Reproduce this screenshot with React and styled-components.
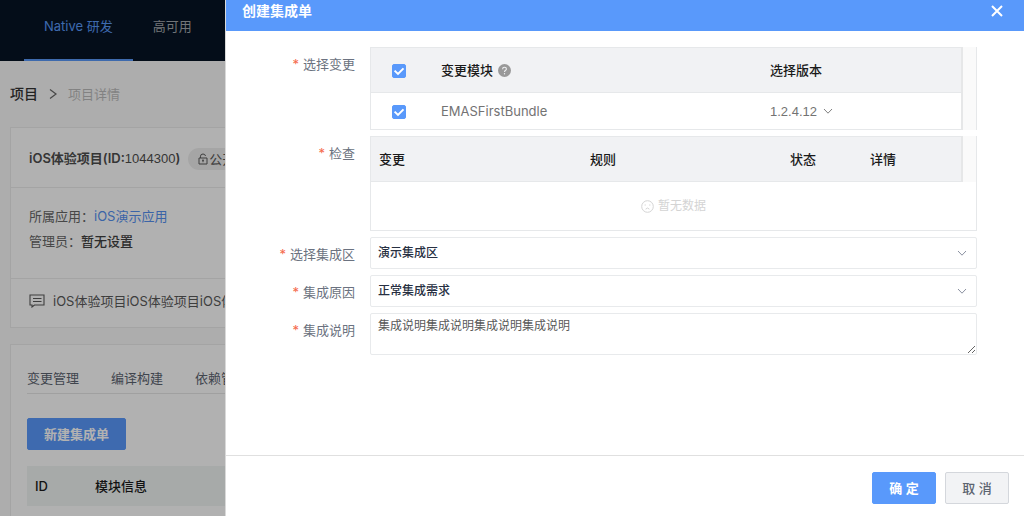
import { useState } from 'react';
import styled, { createGlobalStyle } from 'styled-components';

const GlobalStyle = createGlobalStyle`
  * {
    box-sizing: border-box;
  }

  body {
    margin: 0;
    background: #f8f8f8;
    font-family: Inter, 'Noto Sans CJK SC', sans-serif;
    font-size: 13px;
    line-height: 20px;
    color: #595959;
  }

  button, input, select, textarea {
    font-family: inherit;
    margin: 0;
  }
`;

/* ---------- page behind the drawer ---------- */

const Page = styled.div`
  height: 100vh;
  overflow: hidden;
`;

const TopNav = styled.nav`
  display: flex;
  height: 61px;
  padding-left: 24px;
  background: #071425;
`;

const NavLink = styled.a`
  display: flex;
  align-items: center;
  padding: 0 20px 7px;
  color: ${(props) => (props.$active ? '#5999f8' : '#a3a6ab')};
  border-bottom: 2px solid ${(props) => (props.$active ? '#5999f8' : 'transparent')};
  text-decoration: none;
`;

const Breadcrumb = styled.div`
  display: flex;
  align-items: center;
  gap: 11px;
  height: 66px;
  padding: 0 10px;
  color: #bbb;

  svg {
    color: #666;
  }

  strong {
    font-size: 14px;
    font-weight: 500;
    color: #333;
  }
`;

const Card = styled.section`
  margin: 0 10px 16px;
  background: #fefefe;
  border: 1px solid #ebebeb;
`;

const CardHeader = styled.header`
  display: flex;
  align-items: center;
  gap: 8px;
  height: 59px;
  padding: 2px 18px 0;
  white-space: nowrap;
`;

const ProjectTitle = styled.h2`
  margin: 0;
  font-size: 13px;
  font-weight: 600;
  color: #4d4d4d;

  span {
    font-family: 'Liberation Sans', sans-serif;
    font-weight: 400;
  }
`;

const Badge = styled.span`
  display: flex;
  align-items: center;
  gap: 1px;
  height: 22px;
  padding: 0 10px;
  border-radius: 11px;
  background: #ededed;
`;

const CardBody = styled.div`
  height: 91px;
  padding: 16px 18px;
  border-top: 1px solid #ebebeb;
  line-height: 25px;
  color: #666;

  a {
    color: #5590f0;
    text-decoration: none;
  }

  b {
    font-weight: 500;
    color: #404040;
  }
`;

const CardFooter = styled.footer`
  display: flex;
  align-items: center;
  gap: 8px;
  height: 49px;
  padding: 0 18px 4px;
  border-top: 1px solid #ebebeb;
  white-space: nowrap;
`;

const TabCard = styled(Card)`
  padding: 17px 16px;
`;

const Tabs = styled.div`
  display: flex;
  gap: 32px;
  height: 32px;
  line-height: 32px;
  border-bottom: 1px solid #e6e6e6;
`;

const Tab = styled.a`
  color: #5c6370;
  text-decoration: none;
`;

const Button = styled.button`
  height: 32px;
  min-width: ${(props) => (props.$small ? '64px' : '99px')};
  padding: 0 16px 2px;
  border: 1px solid ${(props) => (props.$plain ? '#d4d7dc' : '#5999fb')};
  border-radius: 2px;
  background: ${(props) => (props.$plain ? '#f2f3f5' : '#5999fb')};
  color: ${(props) => (props.$plain ? '#5c6470' : '#fff')};
  font-size: 13px;
  font-weight: ${(props) => (props.$plain ? 500 : 600)};
  cursor: pointer;
`;

const CreateButton = styled(Button)`
  display: block;
  margin: 24px 0 16px;
`;

const ListTable = styled.table`
  width: 100%;
  border-collapse: collapse;
  table-layout: fixed;

  th {
    height: 40px;
    padding: 0 8px;
    background: #f0f4f2;
    color: #1a1a1a;
    font-weight: 500;
    text-align: left;
  }

  th:first-child {
    width: 60px;
  }
`;

/* ---------- drawer ---------- */

const Mask = styled.div`
  position: fixed;
  inset: 0;
  background: rgba(0, 0, 0, 0.3);
`;

const Drawer = styled.aside`
  position: fixed;
  top: 0;
  right: 0;
  bottom: 0;
  left: 225px;
  display: flex;
  flex-direction: column;
  border-left: 1px solid #d9d9d9;
  background: #fff;
`;

const DrawerHeader = styled.header`
  display: flex;
  justify-content: space-between;
  align-items: center;
  padding: 0 19px 9px 16px;
  background: #5999fb;
  color: #fff;
`;

const DrawerTitle = styled.h1`
  margin: 0;
  font-size: 14px;
  line-height: 22px;
  font-weight: 600;
`;

const CloseButton = styled.button`
  display: flex;
  padding: 0;
  border: 0;
  background: none;
  color: #fff;
  cursor: pointer;
`;

const Form = styled.form`
  flex: 1;
  display: flex;
  flex-direction: column;
  gap: 6px;
  padding: 16px 47px 16px 0;
  overflow: auto;
`;

const FormRow = styled.div`
  display: grid;
  grid-template-columns: 129px 1fr;
  column-gap: 15px;
`;

const Label = styled.label`
  margin-bottom: -2px;
  line-height: 34px;
  text-align: right;
  color: #6b7280;

  &::before {
    content: '*';
    margin-right: 4px;
    color: #f5694b;
  }
`;

const TableBox = styled.div`
  border: 1px solid #e6e8ea;
  border-width: ${(props) => (props.$closed ? '0 1px 1px' : '0 1px 0')};
`;

const TableArea = styled.div`
  padding-right: 13px;
  background: #fafafa;
`;

const Table = styled.table`
  width: 100%;
  border-collapse: separate;
  border-spacing: 0;
  border-right: 2px solid #e6e7e8;
  background: #fff;
  table-layout: fixed;

  th, td {
    padding: 0 ${(props) => props.$pad};
    border-bottom: 1px solid #e6e8ea;
    text-align: left;
  }

  th {
    height: 46px;
    border-top: 1px solid #e6e8ea;
    background: #f1f2f4;
    color: #1a1a1a;
    font-weight: 500;
  }

  td {
    height: 37px;
    color: #737373;
  }
`;

const Col = styled.col`
  width: ${(props) => props.$w};
`;

const HeadText = styled.span`
  display: flex;
  align-items: center;
  gap: 5px;
`;

const CheckWrap = styled.span`
  position: relative;
  display: block;
  width: 14px;
  height: 14px;

  input {
    display: block;
    width: 14px;
    height: 14px;
    appearance: none;
    border: 1px solid #5999fb;
    border-radius: 2px;
    background: #fff;
    cursor: pointer;
  }

  input:checked {
    background: #5999fb;
  }

  svg {
    position: absolute;
    inset: 0;
    pointer-events: none;
  }
`;

const CheckCell = styled.span`
  display: flex;
  padding: 2px 0 0 7px;
`;

const Empty = styled.div`
  display: flex;
  align-items: center;
  justify-content: center;
  gap: 4px;
  height: 48px;
  font-size: 12px;
  color: #d4d4d4;
`;

const SelectWrap = styled.div`
  position: relative;
  display: ${(props) => (props.$inline ? 'inline-flex' : 'flex')};
  align-items: center;

  svg {
    position: absolute;
    right: ${(props) => (props.$inline ? '0' : '10px')};
    color: ${(props) => (props.$inline ? '#808080' : '#8a90a0')};
    pointer-events: none;
  }
`;

const Select = styled.select`
  width: 100%;
  height: 32px;
  padding: 0 28px 1px 7px;
  appearance: none;
  border: 1px solid #e8eaec;
  border-radius: 2px;
  background: #fff;
  color: #273042;
  font-size: 12px;
  font-weight: 500;
`;

const VersionSelect = styled.select`
  height: 24px;
  padding: 0 16px 0 0;
  appearance: none;
  border: 0;
  background: none;
  color: #737373;
  font-family: 'Liberation Sans', sans-serif;
  font-size: 13px;
`;

const TextArea = styled.textarea`
  display: block;
  width: 100%;
  height: 42px;
  padding: 2px 7px;
  border: 1px solid #e8eaec;
  border-radius: 2px;
  color: #595959;
  font-size: 12px;
  line-height: 20px;
  resize: vertical;
`;

const DrawerFooter = styled.footer`
  display: flex;
  justify-content: flex-end;
  gap: 9px;
  padding: 16px 15px 12px;
  border-top: 1px solid #e0e0e0;
`;

/* ---------- icons ---------- */

const Stroke = ({ size = 10, w, h, width = 1, children }) => (
  <svg
    width={w || size}
    height={h || size}
    viewBox={`0 0 ${w || size} ${h || size}`}
    fill="none"
    stroke="currentColor"
    strokeWidth={width}
    aria-hidden="true"
  >
    {children}
  </svg>
);

const ChevronDown = () => (
  <Stroke>
    <path d="M1 3 L5 7.2 L9 3" />
  </Stroke>
);

const ChevronRight = () => (
  <Stroke w={8} h={12} width={1.2}>
    <path d="M1 1.5 L7 6 L1 10.5" />
  </Stroke>
);

const CloseIcon = () => (
  <Stroke size={16} width={2}>
    <path d="M3 3 L13 13 M13 3 L3 13" />
  </Stroke>
);

const LockIcon = () => (
  <Stroke w={10} h={12}>
    <path d="M1 5 H9 V11 H1 Z M2.5 5 V3.2 Q2.5 1 5 1 Q7.2 1 7.5 3 M5 7 V9.2 M4 7.2 H6" />
  </Stroke>
);

const MessageIcon = () => (
  <Stroke w={16} h={14} width={1.1}>
    <path d="M1 1 H15 V11 H5.5 L3 13 V11 H1 Z M4 4.5 H12.5 M4 7.5 H12.5" />
  </Stroke>
);

const SadIcon = () => (
  <Stroke size={13}>
    <circle cx="6.5" cy="6.5" r="5.8" />
    <path d="M4.6 9.2 Q6.5 6.8 8.4 9.2" />
    <path d="M3.6 5 H4.8 M8.2 5 H9.4" />
  </Stroke>
);

const HelpIcon = () => (
  <svg width="13" height="13" viewBox="0 0 13 13" aria-hidden="true">
    <circle cx="6.5" cy="6.5" r="6.5" fill="#999" />
    <path
      d="M4.6 5.2 Q4.6 3.3 6.5 3.3 Q8.4 3.3 8.4 5 Q8.4 5.9 7.4 6.5 Q6.5 7 6.5 8"
      fill="none"
      stroke="#f1f2f4"
      strokeWidth="1.1"
    />
    <circle cx="6.5" cy="9.7" r="0.7" fill="#f1f2f4" />
  </svg>
);

const Checkbox = ({ label, checked, onChange }) => (
  <CheckWrap>
    <input
      type="checkbox"
      aria-label={label}
      checked={checked}
      onChange={(e) => onChange(e.target.checked)}
    />
    {checked && (
      <svg width="14" height="14" viewBox="0 0 14 14" fill="none" stroke="#fff" strokeWidth="2">
        <path d="M2.6 6.6 L6 9.9 L11.5 4.4" />
      </svg>
    )}
  </CheckWrap>
);

const App = () => {
  const [checked, setChecked] = useState(true);
  const [note, setNote] = useState('集成说明集成说明集成说明集成说明');

  return (
    <>
      <GlobalStyle />
      <Page>
        <TopNav>
          <NavLink href="#native" $active>Native 研发</NavLink>
          <NavLink href="#ha">高可用</NavLink>
        </TopNav>

        <Breadcrumb>
          <strong>项目</strong>
          <ChevronRight />
          <span>项目详情</span>
        </Breadcrumb>

        <Card>
          <CardHeader>
            <ProjectTitle>iOS体验项目(ID:<span>1044300</span>)</ProjectTitle>
            <Badge>
              <LockIcon />
              公开
            </Badge>
          </CardHeader>
          <CardBody>
            <div>所属应用：<a href="#app">iOS演示应用</a></div>
            <div>管理员：<b>暂无设置</b></div>
          </CardBody>
          <CardFooter>
            <MessageIcon />
            <span>iOS体验项目iOS体验项目iOS体验项目</span>
          </CardFooter>
        </Card>

        <TabCard>
          <Tabs>
            <Tab href="#change">变更管理</Tab>
            <Tab href="#build">编译构建</Tab>
            <Tab href="#deps">依赖管理</Tab>
          </Tabs>
          <CreateButton type="button">新建集成单</CreateButton>
          <ListTable>
            <thead>
              <tr>
                <th>ID</th>
                <th>模块信息</th>
              </tr>
            </thead>
          </ListTable>
        </TabCard>
      </Page>

      <Mask />

      <Drawer>
        <DrawerHeader>
          <DrawerTitle>创建集成单</DrawerTitle>
          <CloseButton type="button" aria-label="关闭">
            <CloseIcon />
          </CloseButton>
        </DrawerHeader>

        <Form id="integration" onSubmit={(e) => e.preventDefault()}>
          <FormRow>
            <Label as="span">选择变更</Label>
            <TableBox>
              <TableArea>
                <Table $pad="14px">
                  <colgroup>
                    <Col $w="56px" />
                    <Col />
                    <Col $w="205px" />
                  </colgroup>
                  <thead>
                    <tr>
                      <th>
                        <CheckCell>
                          <Checkbox label="全选" checked={checked} onChange={setChecked} />
                        </CheckCell>
                      </th>
                      <th>
                        <HeadText>变更模块 <HelpIcon /></HeadText>
                      </th>
                      <th>选择版本</th>
                    </tr>
                  </thead>
                  <tbody>
                    <tr>
                      <td>
                        <CheckCell>
                          <Checkbox label="EMASFirstBundle" checked={checked} onChange={setChecked} />
                        </CheckCell>
                      </td>
                      <td>EMASFirstBundle</td>
                      <td>
                        <SelectWrap $inline>
                          <VersionSelect aria-label="选择版本">
                            <option>1.2.4.12</option>
                          </VersionSelect>
                          <ChevronDown />
                        </SelectWrap>
                      </td>
                    </tr>
                  </tbody>
                </Table>
              </TableArea>
            </TableBox>
          </FormRow>

          <FormRow>
            <Label as="span">检查</Label>
            <TableBox $closed>
              <TableArea>
                <Table $pad="8px">
                  <colgroup>
                    <Col />
                    <Col $w="200px" />
                    <Col $w="80px" />
                    <Col $w="99px" />
                  </colgroup>
                  <thead>
                    <tr>
                      <th>变更</th>
                      <th>规则</th>
                      <th>状态</th>
                      <th>详情</th>
                    </tr>
                  </thead>
                </Table>
              </TableArea>
              <Empty>
                <SadIcon />
                暂无数据
              </Empty>
            </TableBox>
          </FormRow>

          <FormRow>
            <Label htmlFor="area">选择集成区</Label>
            <SelectWrap>
              <Select id="area">
                <option>演示集成区</option>
              </Select>
              <ChevronDown />
            </SelectWrap>
          </FormRow>

          <FormRow>
            <Label htmlFor="reason">集成原因</Label>
            <SelectWrap>
              <Select id="reason">
                <option>正常集成需求</option>
              </Select>
              <ChevronDown />
            </SelectWrap>
          </FormRow>

          <FormRow>
            <Label htmlFor="note">集成说明</Label>
            <TextArea id="note" value={note} onChange={(e) => setNote(e.target.value)} />
          </FormRow>
        </Form>

        <DrawerFooter>
          <Button type="submit" form="integration" $small>确 定</Button>
          <Button type="button" $small $plain>取 消</Button>
        </DrawerFooter>
      </Drawer>
    </>
  );
};

export default App;
